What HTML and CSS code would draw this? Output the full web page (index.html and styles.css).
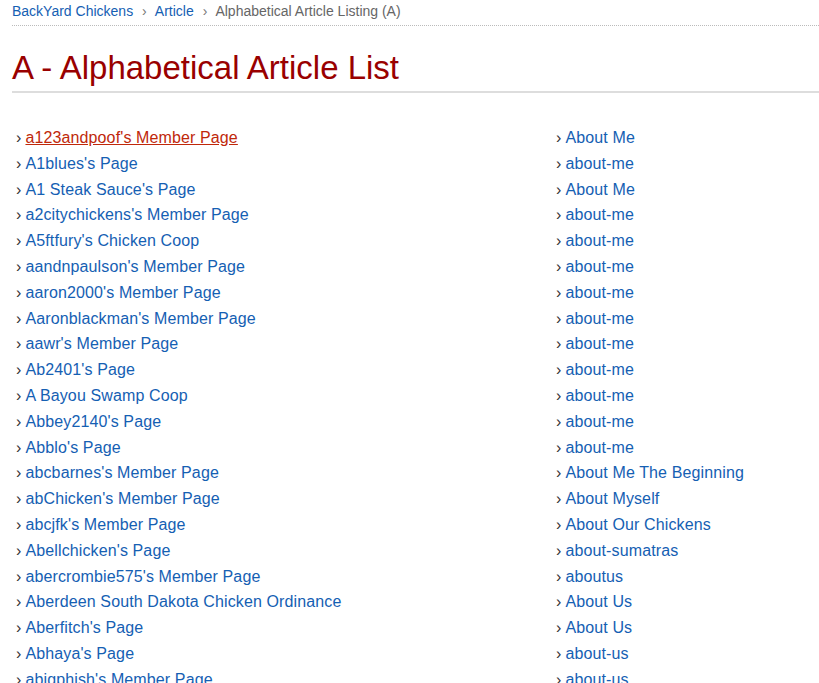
FILE: index.html
```html
<!DOCTYPE html>
<html lang="en">
<head>
  <meta charset="UTF-8" />
  <meta name="viewport" content="width=device-width, initial-scale=1.0" />
  <title>A - Alphabetical Article List</title>
  <link rel="stylesheet" href="styles.css">
</head>
<body>
  <div class="page">
    <div class="breadcrumb">
      <a href="#">BackYard Chickens</a>
      <span class="sep">›</span>
      <a href="#">Article</a>
      <span class="sep">›</span>
      <span class="current">Alphabetical Article Listing (A)</span>
    </div>

    <h1 class="page-title">A - Alphabetical Article List</h1>

    <div class="article-list">
      <ul class="col col-left">
        <li><a href="#" class="active">a123andpoof's Member Page</a></li>
        <li><a href="#">A1blues's Page</a></li>
        <li><a href="#">A1 Steak Sauce's Page</a></li>
        <li><a href="#">a2citychickens's Member Page</a></li>
        <li><a href="#">A5ftfury's Chicken Coop</a></li>
        <li><a href="#">aandnpaulson's Member Page</a></li>
        <li><a href="#">aaron2000's Member Page</a></li>
        <li><a href="#">Aaronblackman's Member Page</a></li>
        <li><a href="#">aawr's Member Page</a></li>
        <li><a href="#">Ab2401's Page</a></li>
        <li><a href="#">A Bayou Swamp Coop</a></li>
        <li><a href="#">Abbey2140's Page</a></li>
        <li><a href="#">Abblo's Page</a></li>
        <li><a href="#">abcbarnes's Member Page</a></li>
        <li><a href="#">abChicken's Member Page</a></li>
        <li><a href="#">abcjfk's Member Page</a></li>
        <li><a href="#">Abellchicken's Page</a></li>
        <li><a href="#">abercrombie575's Member Page</a></li>
        <li><a href="#">Aberdeen South Dakota Chicken Ordinance</a></li>
        <li><a href="#">Aberfitch's Page</a></li>
        <li><a href="#">Abhaya's Page</a></li>
        <li><a href="#">abigphish's Member Page</a></li>
      </ul>
      <ul class="col col-right">
        <li><a href="#">About Me</a></li>
        <li><a href="#">about-me</a></li>
        <li><a href="#">About Me</a></li>
        <li><a href="#">about-me</a></li>
        <li><a href="#">about-me</a></li>
        <li><a href="#">about-me</a></li>
        <li><a href="#">about-me</a></li>
        <li><a href="#">about-me</a></li>
        <li><a href="#">about-me</a></li>
        <li><a href="#">about-me</a></li>
        <li><a href="#">about-me</a></li>
        <li><a href="#">about-me</a></li>
        <li><a href="#">about-me</a></li>
        <li><a href="#">About Me The Beginning</a></li>
        <li><a href="#">About Myself</a></li>
        <li><a href="#">About Our Chickens</a></li>
        <li><a href="#">about-sumatras</a></li>
        <li><a href="#">aboutus</a></li>
        <li><a href="#">About Us</a></li>
        <li><a href="#">About Us</a></li>
        <li><a href="#">about-us</a></li>
        <li><a href="#">about-us</a></li>
      </ul>
    </div>
  </div>
</body>
</html>
```

FILE: styles.css
```css
body {
  font-family: "Liberation Sans", Arial, sans-serif;
  background: #fff;
  color: #333;
  margin: 0;
}
a {
  color: #1560b3;
  text-decoration: none;
}
.page {
  padding: 0 0 0 12px;
}
.breadcrumb {
  font-size: 14px;
  line-height: 16px;
  padding: 3px 0 6px;
  border-bottom: 1px dotted #bbb;
  color: #666;
}
.breadcrumb .sep {
  color: #777;
  margin: 0 5px;
}
.page-title {
  font-size: 33px;
  font-weight: normal;
  color: #990000;
  margin: 22px 0 0;
  line-height: 40px;
  padding-bottom: 3px;
  border-bottom: 2px solid #ddd;
}
.article-list {
  display: grid;
  grid-template-columns: 540px 1fr;
  padding: 32px 0 0 4px;
}
.col {
  list-style: none;
  margin: 0;
  padding: 0;
}
.col li {
  font-size: 16px;
  line-height: 25.8px;
  letter-spacing: 0.12px;
}
.col li::before {
  content: "›";
  color: #333;
  margin-right: 4px;
}
.col a.active {
  color: #c0280a;
  text-decoration: underline;
}
```
